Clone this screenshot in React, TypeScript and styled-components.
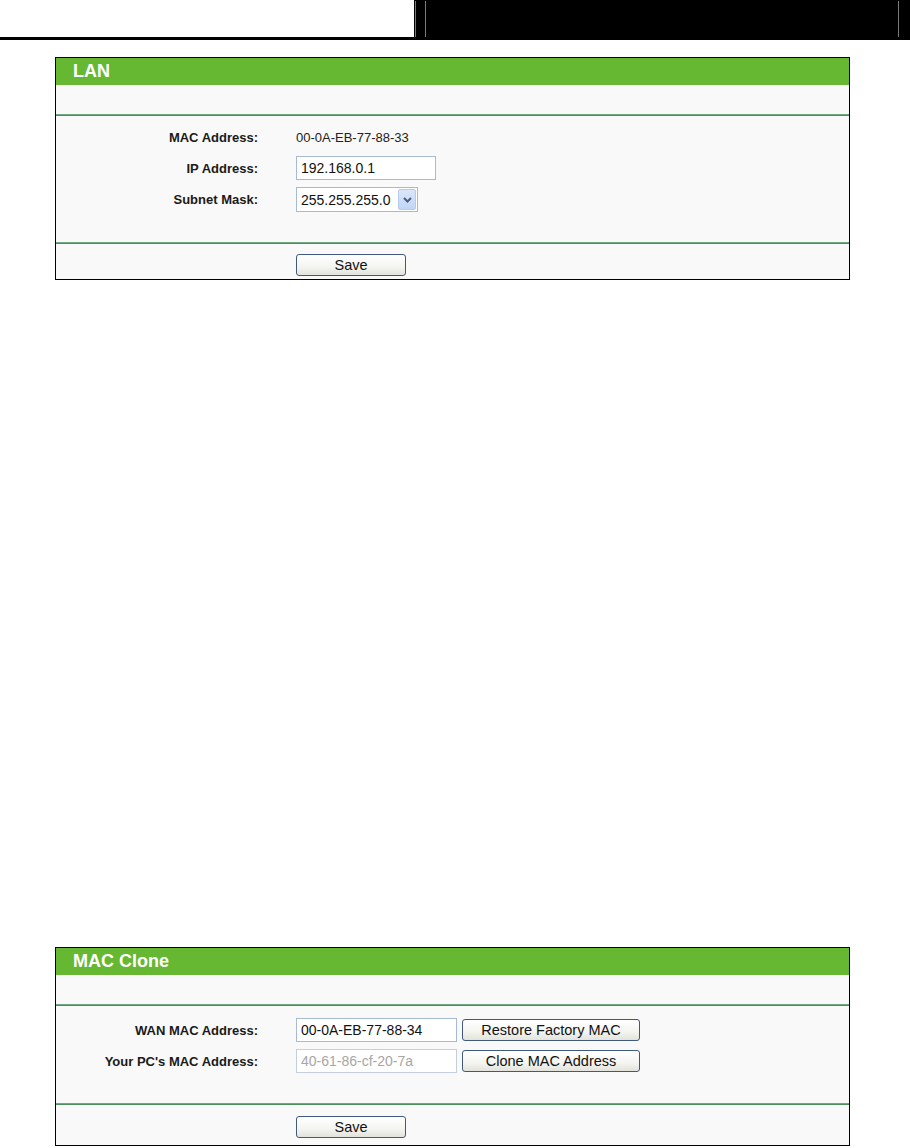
import React from 'react';
import styled, { createGlobalStyle } from 'styled-components';

const GlobalStyle = createGlobalStyle`
  html, body {
    margin: 0;
    padding: 0;
    background: #ffffff;
    font-family: "Liberation Sans", Arial, sans-serif;
  }
`;

export default function App() {
  return (
    <>
      <GlobalStyle />
      <Page>
        <TopBar>
          <TopLeft />
          <TopRight>
            <Rule $left={1} />
            <Rule $left={9} />
            <Rule $left={0} $auto />
          </TopRight>
        </TopBar>

        <Panel $top={17}>
          <TitleBar>LAN</TitleBar>
          <Spacer />
          <Divider />
          <Form $top={9}>
            <Row>
              <Label>MAC Address:</Label>
              <Value>00-0A-EB-77-88-33</Value>
            </Row>
            <Row>
              <Label>IP Address:</Label>
              <TextInput $width={140} defaultValue="192.168.0.1" />
            </Row>
            <Row>
              <Label>Subnet Mask:</Label>
              <SelectBox>
                <SelectText>255.255.255.0</SelectText>
                <SelectArrow>
                  <svg width="9" height="6" viewBox="0 0 9 6">
                    <path d="M1 1 L4.5 4.5 L8 1" fill="none" stroke="#4b5f83" strokeWidth="2" />
                  </svg>
                </SelectArrow>
              </SelectBox>
            </Row>
          </Form>
          <Divider />
          <Footer $height={35} $top={10}>
            <Button $width={110}>Save</Button>
          </Footer>
        </Panel>

        <Panel $top={667}>
          <TitleBar>MAC Clone</TitleBar>
          <Spacer />
          <Divider />
          <Form $top={12}>
            <Row>
              <Label>WAN MAC Address:</Label>
              <Field>
                <TextInput $width={161} defaultValue="00-0A-EB-77-88-34" />
                <Button $width={178}>Restore Factory MAC</Button>
              </Field>
            </Row>
            <Row>
              <Label>Your PC's MAC Address:</Label>
              <Field>
                <TextInput $width={161} defaultValue="40-61-86-cf-20-7a" disabled />
                <Button $width={178}>Clone MAC Address</Button>
              </Field>
            </Row>
          </Form>
          <Divider />
          <Footer $height={40} $top={11}>
            <Button $width={110}>Save</Button>
          </Footer>
        </Panel>
      </Page>
    </>
  );
}

const Page = styled.div`
  width: 910px;
  min-height: 1148px;
`;

const TopBar = styled.div`
  display: flex;
  height: 37px;
  border-bottom: 3px solid #000;
`;

const TopLeft = styled.div`
  width: 414px;
  background: #fff;
`;

const TopRight = styled.div`
  flex: 1;
  display: flex;
  background: #000;
  padding-top: 1px;
`;

const Rule = styled.div<{ $left: number; $auto?: boolean }>`
  width: 1px;
  background: #7a7a7a;
  margin-left: ${(p) => (p.$auto ? 'auto' : `${p.$left}px`)};
  margin-right: ${(p) => (p.$auto ? '11px' : '0')};
`;

const Panel = styled.section<{ $top: number }>`
  box-sizing: border-box;
  width: 795px;
  margin: ${(p) => p.$top}px 0 0 55px;
  border: 1px solid #000;
  background: #f9f9f9;
`;

const TitleBar = styled.div`
  height: 27px;
  line-height: 27px;
  padding-left: 17px;
  background: #66b732;
  color: #fff;
  font-size: 18px;
  font-weight: bold;
`;

const Spacer = styled.div`
  height: 29px;
`;

const Divider = styled.div`
  height: 0;
  border-top: 1px solid #6fa880;
  border-bottom: 1px solid #4e8f60;
`;

const Form = styled.div<{ $top: number }>`
  display: flex;
  flex-direction: column;
  gap: 7px;
  padding: ${(p) => p.$top}px 0 30px;
`;

const Row = styled.div`
  display: grid;
  grid-template-columns: 202px auto;
  column-gap: 38px;
  align-items: center;
  min-height: 24px;
`;

const Label = styled.div`
  text-align: right;
  font-size: 13px;
  font-weight: bold;
  color: #1a1a1a;
`;

const Value = styled.div`
  font-size: 13px;
  color: #222;
`;

const Field = styled.div`
  display: flex;
  align-items: center;
  gap: 5px;
`;

const TextInput = styled.input<{ $width: number }>`
  box-sizing: border-box;
  width: ${(p) => p.$width}px;
  height: 24px;
  padding: 0 4px;
  border: 1px solid #a7bad4;
  background: #fff;
  font-family: "Liberation Sans", Arial, sans-serif;
  font-size: 14px;
  color: #111;
  outline: none;

  &:disabled {
    color: #a6a6a6;
    border-color: #c3cfdf;
    background: #fff;
  }
`;

const SelectBox = styled.div`
  box-sizing: border-box;
  display: flex;
  align-items: stretch;
  width: 122px;
  height: 25px;
  border: 1px solid #a7bad4;
  background: #fff;
  padding: 1px;
`;

const SelectText = styled.span`
  flex: 1;
  display: flex;
  align-items: center;
  padding-left: 3px;
  font-size: 14px;
  color: #111;
`;

const SelectArrow = styled.span`
  display: flex;
  align-items: center;
  justify-content: center;
  width: 16px;
  border: 1px solid #b7caee;
  border-radius: 2px;
  background: linear-gradient(#dbe6fb, #c2d5f7);
`;

const Footer = styled.div<{ $height: number; $top: number }>`
  box-sizing: border-box;
  height: ${(p) => p.$height}px;
  padding: ${(p) => p.$top}px 0 0 240px;
`;

const Button = styled.button<{ $width: number }>`
  box-sizing: border-box;
  width: ${(p) => p.$width}px;
  height: 22px;
  padding: 0;
  border: 1px solid #3f5a7c;
  border-radius: 3px;
  background: linear-gradient(#ffffff 0%, #f4f4f0 60%, #e3e3dc 100%);
  font-family: "Liberation Sans", Arial, sans-serif;
  font-size: 14.5px;
  color: #111;
  cursor: pointer;
`;
